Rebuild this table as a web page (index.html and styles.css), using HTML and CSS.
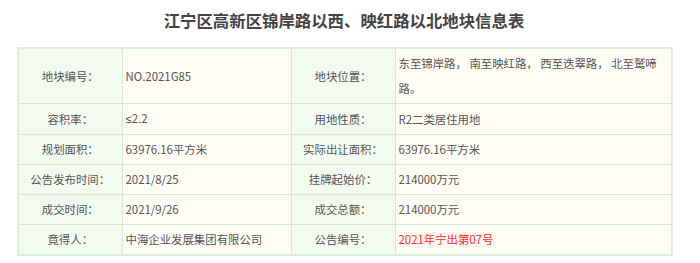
FILE: index.html
```html
<!DOCTYPE html>
<html lang="zh">
<head>
<meta charset="utf-8">
<link rel="stylesheet" href="styles.css">
</head>
<body>
<div class="wrap">
  <h1 class="title">江宁区高新区锦岸路以西、映红路以北地块信息表</h1>
  <table class="info">
    <colgroup>
      <col class="c1"><col class="c2"><col class="c3"><col class="c4">
    </colgroup>
    <tr class="tall">
      <td class="lbl">地块编号<span class="colon">：</span></td>
      <td class="val">NO.2021G85</td>
      <td class="lbl">地块位置<span class="colon">：</span></td>
      <td class="val">东至锦岸路， 南至映红路， 西至迭翠路， 北至鹫啼路。</td>
    </tr>
    <tr>
      <td class="lbl">容积率<span class="colon">：</span></td>
      <td class="val"><span class="sym">≤</span>2.2</td>
      <td class="lbl">用地性质<span class="colon">：</span></td>
      <td class="val">R2二类居住用地</td>
    </tr>
    <tr>
      <td class="lbl">规划面积<span class="colon">：</span></td>
      <td class="val">63976.16平方米</td>
      <td class="lbl">实际出让面积<span class="colon">：</span></td>
      <td class="val">63976.16平方米</td>
    </tr>
    <tr>
      <td class="lbl">公告发布时间<span class="colon">：</span></td>
      <td class="val">2021/8/25</td>
      <td class="lbl">挂牌起始价<span class="colon">：</span></td>
      <td class="val">214000万元</td>
    </tr>
    <tr>
      <td class="lbl">成交时间<span class="colon">：</span></td>
      <td class="val">2021/9/26</td>
      <td class="lbl">成交总额<span class="colon">：</span></td>
      <td class="val">214000万元</td>
    </tr>
    <tr>
      <td class="lbl">竟得人<span class="colon">：</span></td>
      <td class="val">中海企业发展集团有限公司</td>
      <td class="lbl">公告编号<span class="colon">：</span></td>
      <td class="val red">2021年宁出第07号</td>
    </tr>
  </table>
</div>
</body>
</html>
```

FILE: styles.css
```css
html, body {
  margin: 0;
  padding: 0;
  background: #ffffff;
}
body {
  font-family: "Noto Sans CJK SC", "Noto Sans", sans-serif;
  color: #555555;
}
.wrap {
  width: 654px;
  margin-left: 17px;
}
.title {
  margin: 0;
  height: 47px;
  line-height: 40px;
  text-align: center;
  font-size: 16.4px;
  font-weight: bold;
  color: #444444;
}
.info {
  width: 654px;
  border-collapse: collapse;
  table-layout: fixed;
  font-size: 11.4px;
  border: 2px solid #dcefd8;
}
.c1 { width: 104px; }
.c2 { width: 169px; }
.c3 { width: 104px; }
.c4 { width: 277px; }
.info td {
  border: 1px solid #d4ead0;
  line-height: 25px;
  padding: 2px 3px;
  vertical-align: middle;
}
.info .lbl {
  background: #f3fbf1;
  text-align: center;
}
.info .val {
  background: #fffcf5;
  text-align: left;
}
.info .red {
  color: #ff2a2a;
}
.colon {
  font-family: "Noto Sans CJK TC", "Noto Sans CJK SC", sans-serif;
}
.sym {
  font-family: "Liberation Sans", "Noto Sans", sans-serif;
}
```
